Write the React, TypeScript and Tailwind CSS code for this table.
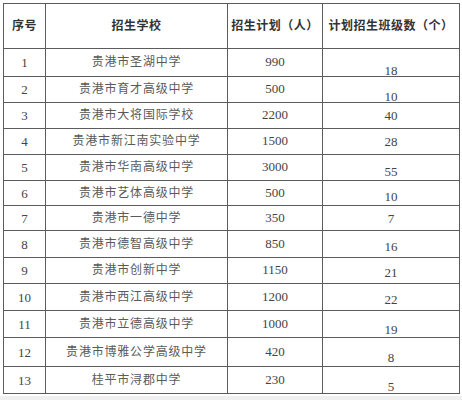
import React from "react"

interface Row {
  no: number
  school: string
  plan: number
  classes: number
  shift: string
}

// shift = how far the last column's number sits below the middle of the cell
const rows: Row[] = [
  { no: 1, school: "贵港市圣湖中学", plan: 990, classes: 18, shift: "mt-[8px] -mb-[8px]" },
  { no: 2, school: "贵港市育才高级中学", plan: 500, classes: 10, shift: "mt-[7px] -mb-[7px]" },
  { no: 3, school: "贵港市大将国际学校", plan: 2200, classes: 40, shift: "" },
  { no: 4, school: "贵港市新江南实验中学", plan: 1500, classes: 28, shift: "" },
  { no: 5, school: "贵港市华南高级中学", plan: 3000, classes: 55, shift: "mt-[4px] -mb-[4px]" },
  { no: 6, school: "贵港市艺体高级中学", plan: 500, classes: 10, shift: "mt-[3px] -mb-[3px]" },
  { no: 7, school: "贵港市一德中学", plan: 350, classes: 7, shift: "" },
  { no: 8, school: "贵港市德智高级中学", plan: 850, classes: 16, shift: "mt-[2px] -mb-[2px]" },
  { no: 9, school: "贵港市创新中学", plan: 1150, classes: 21, shift: "mt-[2px] -mb-[2px]" },
  { no: 10, school: "贵港市西江高级中学", plan: 1200, classes: 22, shift: "mt-[2px] -mb-[2px]" },
  { no: 11, school: "贵港市立德高级中学", plan: 1000, classes: 19, shift: "mt-[5px] -mb-[5px]" },
  { no: 12, school: "贵港市博雅公学高级中学", plan: 420, classes: 8, shift: "mt-[5px] -mb-[5px]" },
  { no: 13, school: "桂平市浔郡中学", plan: 230, classes: 5, shift: "mt-[6px] -mb-[6px]" },
]

const heights = [
  "h-[28px]", "h-[26px]", "h-[26px]", "h-[26px]", "h-[26px]", "h-[25px]", "h-[25px]",
  "h-[27px]", "h-[26px]", "h-[27px]", "h-[27px]", "h-[29px]", "h-[27px]",
]

const cell = "border border-[#5c5c5c] p-0 text-center align-middle leading-[15px]"

export default function App() {
  return (
    <div className="flex h-[400px] w-[462px] flex-col bg-white font-['Liberation_Serif','Noto_Sans_CJK_SC',serif]">
      <div className="pl-[3px] pt-[3px]">
        <table className="w-[456px] table-fixed border-collapse">
          <colgroup>
            <col className="w-[42px]" />
            <col className="w-[182px]" />
            <col className="w-[95px]" />
            <col className="w-[137px]" />
          </colgroup>
          <thead>
            <tr className="h-[45px] text-[12px] font-bold text-[#333] tracking-[0.5px]">
              <th className={cell}>序号</th>
              <th className={cell}>招生学校</th>
              <th className={cell}>招生计划（人）</th>
              <th className={cell}>计划招生班级数（个）</th>
            </tr>
          </thead>
          <tbody>
            {rows.map((r, i) => (
              <tr key={r.no} className={heights[i]}>
                <td className={`${cell} text-[13px] text-[#444]`}>{r.no}</td>
                <td className={`${cell} text-[12px] tracking-[0.8px] text-[#5a5a5a]`}>{r.school}</td>
                <td className={`${cell} text-[13px] text-[#444]`}>
                  <div className="-mt-[1px] mb-[1px]">{r.plan}</div>
                </td>
                <td className={`${cell} text-[13px] text-[#444]`}>
                  <div className={r.shift}>{r.classes}</div>
                </td>
              </tr>
            ))}
          </tbody>
        </table>
      </div>
      <div className="mt-[2px] flex-1 bg-[#efefef]" />
    </div>
  )
}
